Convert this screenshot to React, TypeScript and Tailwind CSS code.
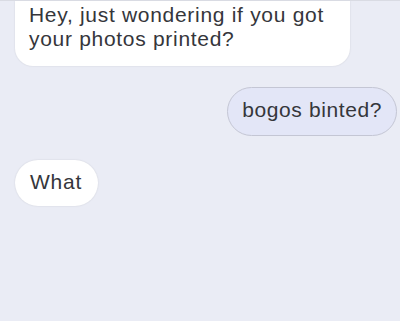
import React from "react";

export default function App() {
  const font = { fontFamily: '"Liberation Sans", Arial, sans-serif' };
  return (
    <div
      className="w-[400px] h-[321px] overflow-hidden bg-[#eaecf5] border-t border-[#d9dbe3] flex flex-col text-[#35363b]"
      style={font}
    >
      <div className="ml-[15px] w-[335px] rounded-b-[18px] bg-white shadow-[0_0_2px_rgba(0,0,0,0.12)] pl-[14px] pr-3 pt-[2px] pb-[15px] text-[21px] leading-[24px] tracking-[0.7px]">
        Hey, just wondering if you got
        <br />
        your photos printed?
      </div>
      <div className="mt-[21px] flex justify-end pr-[3px]">
        <div className="h-[49px] flex items-center rounded-full border border-[#c4c6d4] bg-[#e3e6f7] px-[14px] text-[21px] leading-[24px] tracking-[0.6px] pb-[3px]">
          bogos binted?
        </div>
      </div>
      <div className="mt-[24px] flex">
        <div className="ml-[15px] h-[46px] flex items-center rounded-full bg-white shadow-[0_0_2px_rgba(0,0,0,0.12)] pl-[15px] pr-[16px] text-[21px] leading-[24px] tracking-[0.8px] pb-[3px]">
          What
        </div>
      </div>
    </div>
  );
}
